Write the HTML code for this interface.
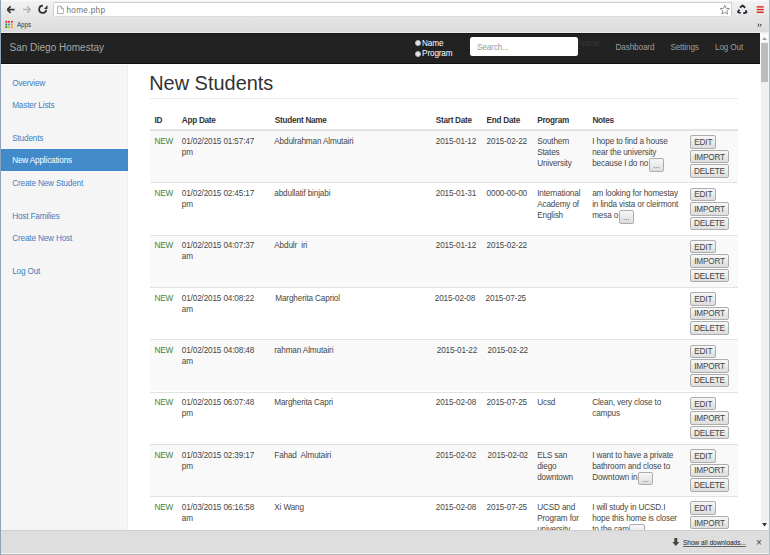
<!DOCTYPE html>
<html><head><meta charset="utf-8"><style>
*{margin:0;padding:0;box-sizing:border-box}
html,body{width:770px;height:555px;overflow:hidden;background:#fff}
body{position:relative;font-family:"Liberation Sans",sans-serif;font-size:8.2px;letter-spacing:-0.15px;color:#333;line-height:11px}
.a{position:absolute;white-space:nowrap}
.t{position:absolute;white-space:nowrap;line-height:11px;color:#474747}
.btn{position:absolute;height:13.6px;border:1px solid #adadad;border-radius:2px;background:linear-gradient(#f7f7f7,#dddddd);color:#444;font-size:8.2px;line-height:11.6px;padding-top:0.8px;text-align:center}
.side a{position:absolute;left:12.2px;color:#3d80c0;font-size:8.2px;letter-spacing:-0.16px;text-decoration:none;white-space:nowrap}
.th{position:absolute;font-weight:bold;white-space:nowrap;letter-spacing:-0.27px}
</style></head><body>
<div class="a" style="left:0;top:0;width:770px;height:33px;background:linear-gradient(#f3f3f3,#e6e6e6 50%,#dbdbdb)"></div>
<div class="a" style="left:0;top:0;width:770px;height:1px;background:#fafafa"></div>
<div class="a" style="left:0;top:31.5px;width:770px;height:1.5px;background:#ececec"></div>
<div class="a" style="left:53px;top:2px;width:679px;height:14.8px;background:#fff;border:1px solid #cfcfcf;border-bottom-color:#dedede;border-radius:2px"></div>
<svg class="a" style="left:0;top:0" width="770" height="33" viewBox="0 0 770 33">
<g fill="none" stroke="#383838" stroke-width="1.7" stroke-linecap="butt">
<path d="M7.3 9.6 H14.6 M7.3 9.6 L10.6 6.4 M7.3 9.6 L10.6 12.8"/>
</g>
<g fill="none" stroke="#b4b4b4" stroke-width="1.5">
<path d="M30.4 9.6 H23 M30.4 9.6 L27.1 6.4 M30.4 9.6 L27.1 12.8"/>
</g>
<path d="M42.9 5.7 A3.6 3.6 0 1 0 46.3 9.9" fill="none" stroke="#2e2e2e" stroke-width="1.7"/>
<path d="M43.9 8.9 L47.5 8.9 L47.5 5.3 Z" fill="#2e2e2e"/>
<path d="M57.6 6.2 H61 L63.3 8.5 V13.6 H57.6 Z M61 6.2 V8.5 H63.3" fill="#fff" stroke="#999" stroke-width="0.8"/>
<path d="M724.8 5.2 L726.1 8.3 L729.4 8.6 L726.9 10.8 L727.7 14 L724.8 12.3 L721.9 14 L722.7 10.8 L720.2 8.6 L723.5 8.3 Z" fill="#fff" stroke="#777" stroke-width="0.8"/>
<g fill="none" stroke="#1e2633" stroke-width="1.8" stroke-linejoin="round">
<path d="M740.0 7.4 L742.6 5.5 L745.2 7.7"/><path d="M739.3 9.6 L738.0 12.0 L740.6 13.3"/><path d="M745.7 10.2 L746.5 12.3 L743.3 13.3"/>
</g>
<path d="M757.6 23.8 L759.2 25.2 L757.6 26.6 M759.8 23.8 L761.4 25.2 L759.8 26.6" fill="none" stroke="#333" stroke-width="0.9"/>
<g fill="#e2231a"><rect x="756.7" y="6.2" width="7" height="1.4"/><rect x="756.7" y="8.9" width="7" height="1.4"/><rect x="756.7" y="11.6" width="7" height="1.4"/></g>
<g>
<rect x="5.4" y="20.9" width="1.8" height="1.8" fill="#f01c1c"/><rect x="8.1" y="20.9" width="1.8" height="1.8" fill="#f01c1c"/><rect x="11" y="20.9" width="1.8" height="1.8" fill="#f0283c"/>
<rect x="5.4" y="23.6" width="1.8" height="1.8" fill="#1a8a2a"/><rect x="8.1" y="23.6" width="1.8" height="1.8" fill="#2a8af0"/><rect x="11" y="23.6" width="1.8" height="1.8" fill="#f8a000"/>
<rect x="5.4" y="26.2" width="1.8" height="1.8" fill="#1a8a2a"/><rect x="8.1" y="26.2" width="1.8" height="1.8" fill="#f8b000"/><rect x="11" y="26.2" width="1.8" height="1.8" fill="#f8a000"/>
</g>
</svg>
<div class="a" style="left:66.5px;top:4.5px;font-size:8.2px;letter-spacing:0.3px;line-height:11px;color:#707070">home.php</div>
<div class="a" style="left:16.8px;top:20.3px;font-size:6.8px;letter-spacing:0;line-height:9px;color:#333;transform:scaleX(0.9);transform-origin:0 0">Apps</div>
<div class="a" style="left:0;top:0;width:1px;height:555px;background:#8fa3b8"></div>
<div class="a" style="left:769px;top:0;width:1px;height:555px;background:#b5bbc5"></div>
<div class="a" style="left:1px;top:33px;width:759px;height:31px;background:#222;border-top:1px solid #181818;border-bottom:1.5px solid #111"></div>
<div class="a" style="left:9.5px;top:41.7px;font-size:10.0px;letter-spacing:0;line-height:11px;color:#a6a6a6">San Diego Homestay</div>
<div class="a" style="left:414.8px;top:39.9px;width:6.5px;height:6.5px;border-radius:50%;background:#e4e4e4;border:0.6px solid #bbb"></div>
<div class="a" style="left:414.8px;top:50.6px;width:6.5px;height:6.5px;border-radius:50%;background:#e4e4e4;border:0.6px solid #bbb"></div>
<div class="a" style="left:422.1px;top:37.5px;color:#fff">Name</div>
<div class="a" style="left:422.1px;top:48.2px;color:#fff">Program</div>
<div class="a" style="left:578.3px;top:37.5px;color:#383838">Name</div>
<div class="a" style="left:470px;top:37.2px;width:108.2px;height:19.3px;background:#fff;border-radius:2.5px"></div>
<div class="a" style="left:477px;top:41.6px;color:#999">Search...</div>
<div class="a" style="left:615.6px;top:41.6px;color:#9d9d9d">Dashboard</div>
<div class="a" style="left:670.4px;top:41.6px;color:#9d9d9d">Settings</div>
<div class="a" style="left:715px;top:41.6px;color:#9d9d9d">Log Out</div>
<div class="a" style="left:760px;top:33px;width:9px;height:497px;background:#f0f0f0;border-left:1px solid #fbfbfb"></div>
<div class="a" style="left:761px;top:43px;width:6.5px;height:38.5px;background:#bcbcbc"></div>
<div class="a" style="left:761px;top:33.5px;width:7px;height:8px;background:#fbfbfb"></div>
<div class="a" style="left:761px;top:520.5px;width:7px;height:9px;background:#fbfbfb"></div>
<svg class="a" style="left:760px;top:33px" width="9" height="497" viewBox="0 0 9 497">
<path d="M2 7 L4.5 4 L7 7 Z" fill="#a3a3a3"/>
<path d="M2 490 L4.5 493.5 L7 490 Z" fill="#333"/>
</svg>
<div class="a" style="left:1px;top:64px;width:127px;height:466px;background:#f5f5f5;border-top:1px solid #fff;border-right:1px solid #efefef"></div>
<div class="a" style="left:1px;top:149.2px;width:126.5px;height:22px;background:#428bca"></div>
<div class="side">
<a style="top:78.3px">Overview</a><a style="top:100.2px">Master Lists</a><a style="top:133.4px">Students</a><a style="top:177.5px">Create New Student</a><a style="top:210.5px">Host Families</a><a style="top:232.6px">Create New Host</a><a style="top:265.7px">Log Out</a><a style="top:155.2px;color:#fff">New Applications</a></div>
<div class="a" style="left:149.2px;top:71.5px;font-size:19.95px;letter-spacing:0;line-height:22px;color:#333">New Students</div>
<div class="a" style="left:150px;top:98px;width:588px;height:1px;background:#eaeaea"></div>
<div class="th" style="left:154.5px;top:114.8px">ID</div><div class="th" style="left:181.8px;top:114.8px">App Date</div><div class="th" style="left:274.8px;top:114.8px">Student Name</div><div class="th" style="left:435.8px;top:114.8px">Start Date</div><div class="th" style="left:486.6px;top:114.8px">End Date</div><div class="th" style="left:537.2px;top:114.8px">Program</div><div class="th" style="left:592.4px;top:114.8px">Notes</div><div class="a" style="left:150px;top:129px;width:588px;height:2px;background:#e2e2e2"></div>
<div class="a" style="left:150px;top:131.00px;width:588px;height:51.30px;background:#f9f9f9"></div><div class="a" style="left:150px;top:182.30px;width:588px;height:1px;background:#e2e2e2"></div><div class="t" style="left:154.5px;top:135.70px;color:#3a853a">NEW</div><div class="t" style="left:181.8px;top:135.70px">01/02/2015 01:57:47<br>pm</div><div class="t" style="left:274.3px;top:135.70px">Abdulrahman Almutairi</div><div class="t" style="left:435.8px;top:135.70px">2015-01-12</div><div class="t" style="left:486.6px;top:135.70px">2015-02-22</div><div class="t" style="left:537.2px;top:135.70px">Southern<br>States<br>University</div><div class="t" style="left:592.2px;top:135.70px">I hope to find a house<br>near the university<br>because I do no</div><div class="btn" style="left:648.6px;top:158.00px;width:15.5px;color:#777">...</div><div class="btn" style="left:690.2px;top:135.30px;width:26.2px">EDIT</div><div class="btn" style="left:690.2px;top:149.80px;width:38.7px">IMPORT</div><div class="btn" style="left:690.2px;top:164.30px;width:38.4px">DELETE</div>
<div class="a" style="left:150px;top:234.60px;width:588px;height:1px;background:#e2e2e2"></div><div class="t" style="left:154.5px;top:188.00px;color:#3a853a">NEW</div><div class="t" style="left:181.8px;top:188.00px">01/02/2015 02:45:17<br>pm</div><div class="t" style="left:274.3px;top:188.00px">abdullatif binjabi</div><div class="t" style="left:435.8px;top:188.00px">2015-01-31</div><div class="t" style="left:486.6px;top:188.00px">0000-00-00</div><div class="t" style="left:537.2px;top:188.00px">International<br>Academy of<br>English</div><div class="t" style="left:592.2px;top:188.00px">am looking for homestay<br>in linda vista or cleirmont<br>mesa o</div><div class="btn" style="left:618.5px;top:210.30px;width:15.5px;color:#777">...</div><div class="btn" style="left:690.2px;top:187.60px;width:26.2px">EDIT</div><div class="btn" style="left:690.2px;top:202.10px;width:38.7px">IMPORT</div><div class="btn" style="left:690.2px;top:216.60px;width:38.4px">DELETE</div>
<div class="a" style="left:150px;top:235.60px;width:588px;height:51.30px;background:#f9f9f9"></div><div class="a" style="left:150px;top:286.90px;width:588px;height:1px;background:#e2e2e2"></div><div class="t" style="left:154.5px;top:240.30px;color:#3a853a">NEW</div><div class="t" style="left:181.8px;top:240.30px">01/02/2015 04:07:37<br>am</div><div class="t" style="left:274.3px;top:240.30px">Abdulr&nbsp; iri</div><div class="t" style="left:435.8px;top:240.30px">2015-01-12</div><div class="t" style="left:486.6px;top:240.30px">2015-02-22</div><div class="btn" style="left:690.2px;top:239.90px;width:26.2px">EDIT</div><div class="btn" style="left:690.2px;top:254.40px;width:38.7px">IMPORT</div><div class="btn" style="left:690.2px;top:268.90px;width:38.4px">DELETE</div>
<div class="a" style="left:150px;top:339.20px;width:588px;height:1px;background:#e2e2e2"></div><div class="t" style="left:154.5px;top:292.60px;color:#3a853a">NEW</div><div class="t" style="left:181.8px;top:292.60px">01/02/2015 04:08:22<br>am</div><div class="t" style="left:275.3px;top:292.60px">Margherita Capriol</div><div class="t" style="left:434.8px;top:292.60px">2015-02-08</div><div class="t" style="left:485.6px;top:292.60px">2015-07-25</div><div class="btn" style="left:690.2px;top:292.20px;width:26.2px">EDIT</div><div class="btn" style="left:690.2px;top:306.70px;width:38.7px">IMPORT</div><div class="btn" style="left:690.2px;top:321.20px;width:38.4px">DELETE</div>
<div class="a" style="left:150px;top:340.20px;width:588px;height:51.30px;background:#f9f9f9"></div><div class="a" style="left:150px;top:391.50px;width:588px;height:1px;background:#e2e2e2"></div><div class="t" style="left:154.5px;top:344.90px;color:#3a853a">NEW</div><div class="t" style="left:181.8px;top:344.90px">01/02/2015 04:08:48<br>am</div><div class="t" style="left:274.3px;top:344.90px">rahman Almutairi</div><div class="t" style="left:436.8px;top:344.90px">2015-01-22</div><div class="t" style="left:487.6px;top:344.90px">2015-02-22</div><div class="btn" style="left:690.2px;top:344.50px;width:26.2px">EDIT</div><div class="btn" style="left:690.2px;top:359.00px;width:38.7px">IMPORT</div><div class="btn" style="left:690.2px;top:373.50px;width:38.4px">DELETE</div>
<div class="a" style="left:150px;top:443.80px;width:588px;height:1px;background:#e2e2e2"></div><div class="t" style="left:154.5px;top:397.20px;color:#3a853a">NEW</div><div class="t" style="left:181.8px;top:397.20px">01/02/2015 06:07:48<br>pm</div><div class="t" style="left:274.3px;top:397.20px">Margherita Capri</div><div class="t" style="left:435.8px;top:397.20px">2015-02-08</div><div class="t" style="left:486.6px;top:397.20px">2015-07-25</div><div class="t" style="left:537.2px;top:397.20px">Ucsd</div><div class="t" style="left:592.2px;top:397.20px">Clean, very close to<br>campus</div><div class="btn" style="left:690.2px;top:396.80px;width:26.2px">EDIT</div><div class="btn" style="left:690.2px;top:411.30px;width:38.7px">IMPORT</div><div class="btn" style="left:690.2px;top:425.80px;width:38.4px">DELETE</div>
<div class="a" style="left:150px;top:444.80px;width:588px;height:51.30px;background:#f9f9f9"></div><div class="a" style="left:150px;top:496.10px;width:588px;height:1px;background:#e2e2e2"></div><div class="t" style="left:154.5px;top:449.50px;color:#3a853a">NEW</div><div class="t" style="left:181.8px;top:449.50px">01/03/2015 02:39:17<br>pm</div><div class="t" style="left:274.3px;top:449.50px">Fahad&nbsp; Almutairi</div><div class="t" style="left:435.8px;top:449.50px">2015-02-02</div><div class="t" style="left:487.6px;top:449.50px">2015-02-02</div><div class="t" style="left:537.2px;top:449.50px">ELS san<br>diego<br>downtown</div><div class="t" style="left:592.2px;top:449.50px">I want to have a private<br>bathroom and close to<br>Downtown in</div><div class="btn" style="left:637.8px;top:471.80px;width:15.5px;color:#777">...</div><div class="btn" style="left:690.2px;top:449.10px;width:26.2px">EDIT</div><div class="btn" style="left:690.2px;top:463.60px;width:38.7px">IMPORT</div><div class="btn" style="left:690.2px;top:478.10px;width:38.4px">DELETE</div>
<div class="a" style="left:150px;top:548.40px;width:588px;height:1px;background:#e2e2e2"></div><div class="t" style="left:154.5px;top:501.80px;color:#3a853a">NEW</div><div class="t" style="left:181.8px;top:501.80px">01/03/2015 06:16:58<br>am</div><div class="t" style="left:274.3px;top:501.80px">Xi Wang</div><div class="t" style="left:435.8px;top:501.80px">2015-02-08</div><div class="t" style="left:486.6px;top:501.80px">2015-07-25</div><div class="t" style="left:537.2px;top:501.80px">UCSD and<br>Program for<br>university</div><div class="t" style="left:592.2px;top:501.80px">I will study in UCSD.I<br>hope this home is closer<br>to the cam</div><div class="btn" style="left:629.3px;top:524.10px;width:15.5px;color:#777">...</div><div class="btn" style="left:690.2px;top:501.40px;width:26.2px">EDIT</div><div class="btn" style="left:690.2px;top:515.90px;width:38.7px">IMPORT</div>
<div class="a" style="left:1px;top:530px;width:768px;height:25px;background:#dedede;border-top:1px solid #cfcfcf"></div>
<div class="a" style="left:1px;top:553px;width:768px;height:1px;background:#f4f4f4"></div>
<div class="a" style="left:1px;top:554px;width:768px;height:1px;background:#b8b8b8"></div>
<svg class="a" style="left:672px;top:538px" width="8" height="9" viewBox="0 0 8 9"><path d="M2.3 0 H5.3 V4 H7.3 L3.8 8 L0.3 4 H2.3 Z" fill="#444"/></svg>
<div class="a" style="left:682.8px;top:537.5px;font-size:7.2px;line-height:10px;color:#222;text-decoration:underline;text-decoration-color:#666;letter-spacing:0;transform:scaleX(0.905);transform-origin:0 0">Show all downloads...</div>
<div class="a" style="left:756px;top:536.5px;font-size:10px;line-height:11px;color:#444">&times;</div>
</body></html>
